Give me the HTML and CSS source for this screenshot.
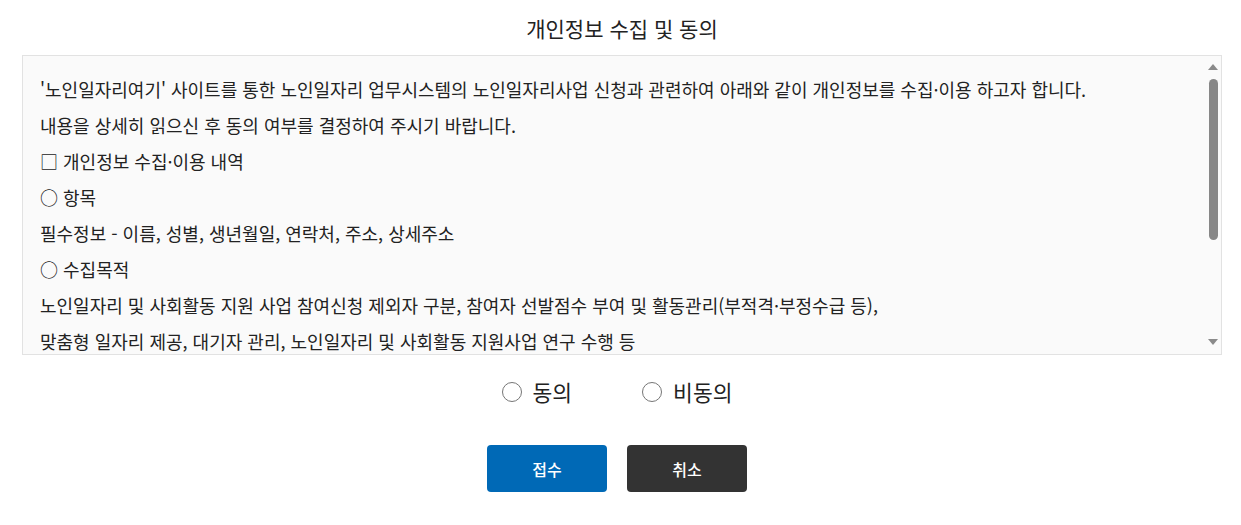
FILE: index.html
```html
<!DOCTYPE html>
<html lang="ko">
<head>
<meta charset="utf-8">
<link rel="stylesheet" href="styles.css">
</head>
<body>
<div class="page">
  <h1 class="title">개인정보 수집 및 동의</h1>
  <div class="terms-wrap">
    <div class="terms">
      <p>'노인일자리여기' 사이트를 통한 노인일자리 업무시스템의 노인일자리사업 신청과 관련하여 아래와 같이 개인정보를 수집·이용 하고자 합니다.</p>
      <p>내용을 상세히 읽으신 후 동의 여부를 결정하여 주시기 바랍니다.</p>
      <p>□ 개인정보 수집·이용 내역</p>
      <p>○ 항목</p>
      <p>필수정보 - 이름, 성별, 생년월일, 연락처, 주소, 상세주소</p>
      <p>○ 수집목적</p>
      <p>노인일자리 및 사회활동 지원 사업 참여신청 제외자 구분, 참여자 선발점수 부여 및 활동관리(부적격·부정수급 등),</p>
      <p>맞춤형 일자리 제공, 대기자 관리, 노인일자리 및 사회활동 지원사업 연구 수행 등</p>
      <p>○ 보유기간</p>
      <p>수집·이용 동의일로부터 5년</p>
    </div>
    <div class="scrollbar" aria-hidden="true">
      <span class="arrow arrow-up"></span>
      <span class="thumb"></span>
      <span class="arrow arrow-down"></span>
    </div>
  </div>
  <div class="choices">
    <label class="choice"><span class="radio"></span><span>동의</span></label>
    <label class="choice"><span class="radio"></span><span>비동의</span></label>
  </div>
  <div class="actions">
    <button class="btn btn-primary" type="button">접수</button>
    <button class="btn btn-dark" type="button">취소</button>
  </div>
</div>
</body>
</html>
```

FILE: styles.css
```css
* { box-sizing: border-box; }
html, body { margin: 0; padding: 0; background: #fff; }
body {
  font-family: "Noto Sans CJK KR", "Noto Sans", sans-serif;
  color: #222;
}
.page {
  padding: 10px 19px 0 22px;
}
.title {
  margin: 0;
  text-align: center;
  font-size: 21px;
  font-weight: 400;
  line-height: 36px;
  color: #222;
}
.terms-wrap {
  position: relative;
  margin-top: 9px;
  height: 300px;
  background: #fafafa;
  border: 1px solid #e2e2e2;
}
.terms {
  height: 100%;
  overflow: hidden;
  padding: 15px 17px 10px;
  font-size: 18px;
  line-height: 36px;
}
.terms p { margin: 0; white-space: nowrap; }
.scrollbar {
  position: absolute;
  top: 0;
  right: 0;
  bottom: 0;
  width: 16px;
  background: #fafafa;
  display: flex;
  flex-direction: column;
  align-items: center;
  padding: 8px 0 9px;
}
.arrow {
  width: 0;
  height: 0;
  border-left: 5px solid transparent;
  border-right: 5px solid transparent;
}
.arrow-up { border-bottom: 6px solid #8a8a8a; }
.arrow-down { border-top: 6px solid #8a8a8a; margin-top: auto; }
.thumb {
  margin-top: 9px;
  width: 9px;
  height: 161px;
  border-radius: 5px;
  background: #878787;
}
.choices {
  display: flex;
  justify-content: center;
  gap: 70px;
  margin-top: 23px;
  padding-right: 10px;
  font-size: 21.5px;
  line-height: 28px;
}
.choice {
  display: flex;
  align-items: center;
  gap: 11px;
}
.radio {
  width: 20px;
  height: 20px;
  border: 1px solid #767676;
  border-radius: 50%;
  background: #fff;
}
.actions {
  display: flex;
  justify-content: center;
  gap: 20px;
  margin-top: 39px;
  padding-right: 10px;
}
.btn {
  width: 120px;
  height: 47px;
  border: 0;
  border-radius: 4px;
  color: #fff;
  font-family: inherit;
  font-size: 16px;
  font-weight: 500;
}
.btn-primary { background: #0069b6; }
.btn-dark { background: #333; }
```
